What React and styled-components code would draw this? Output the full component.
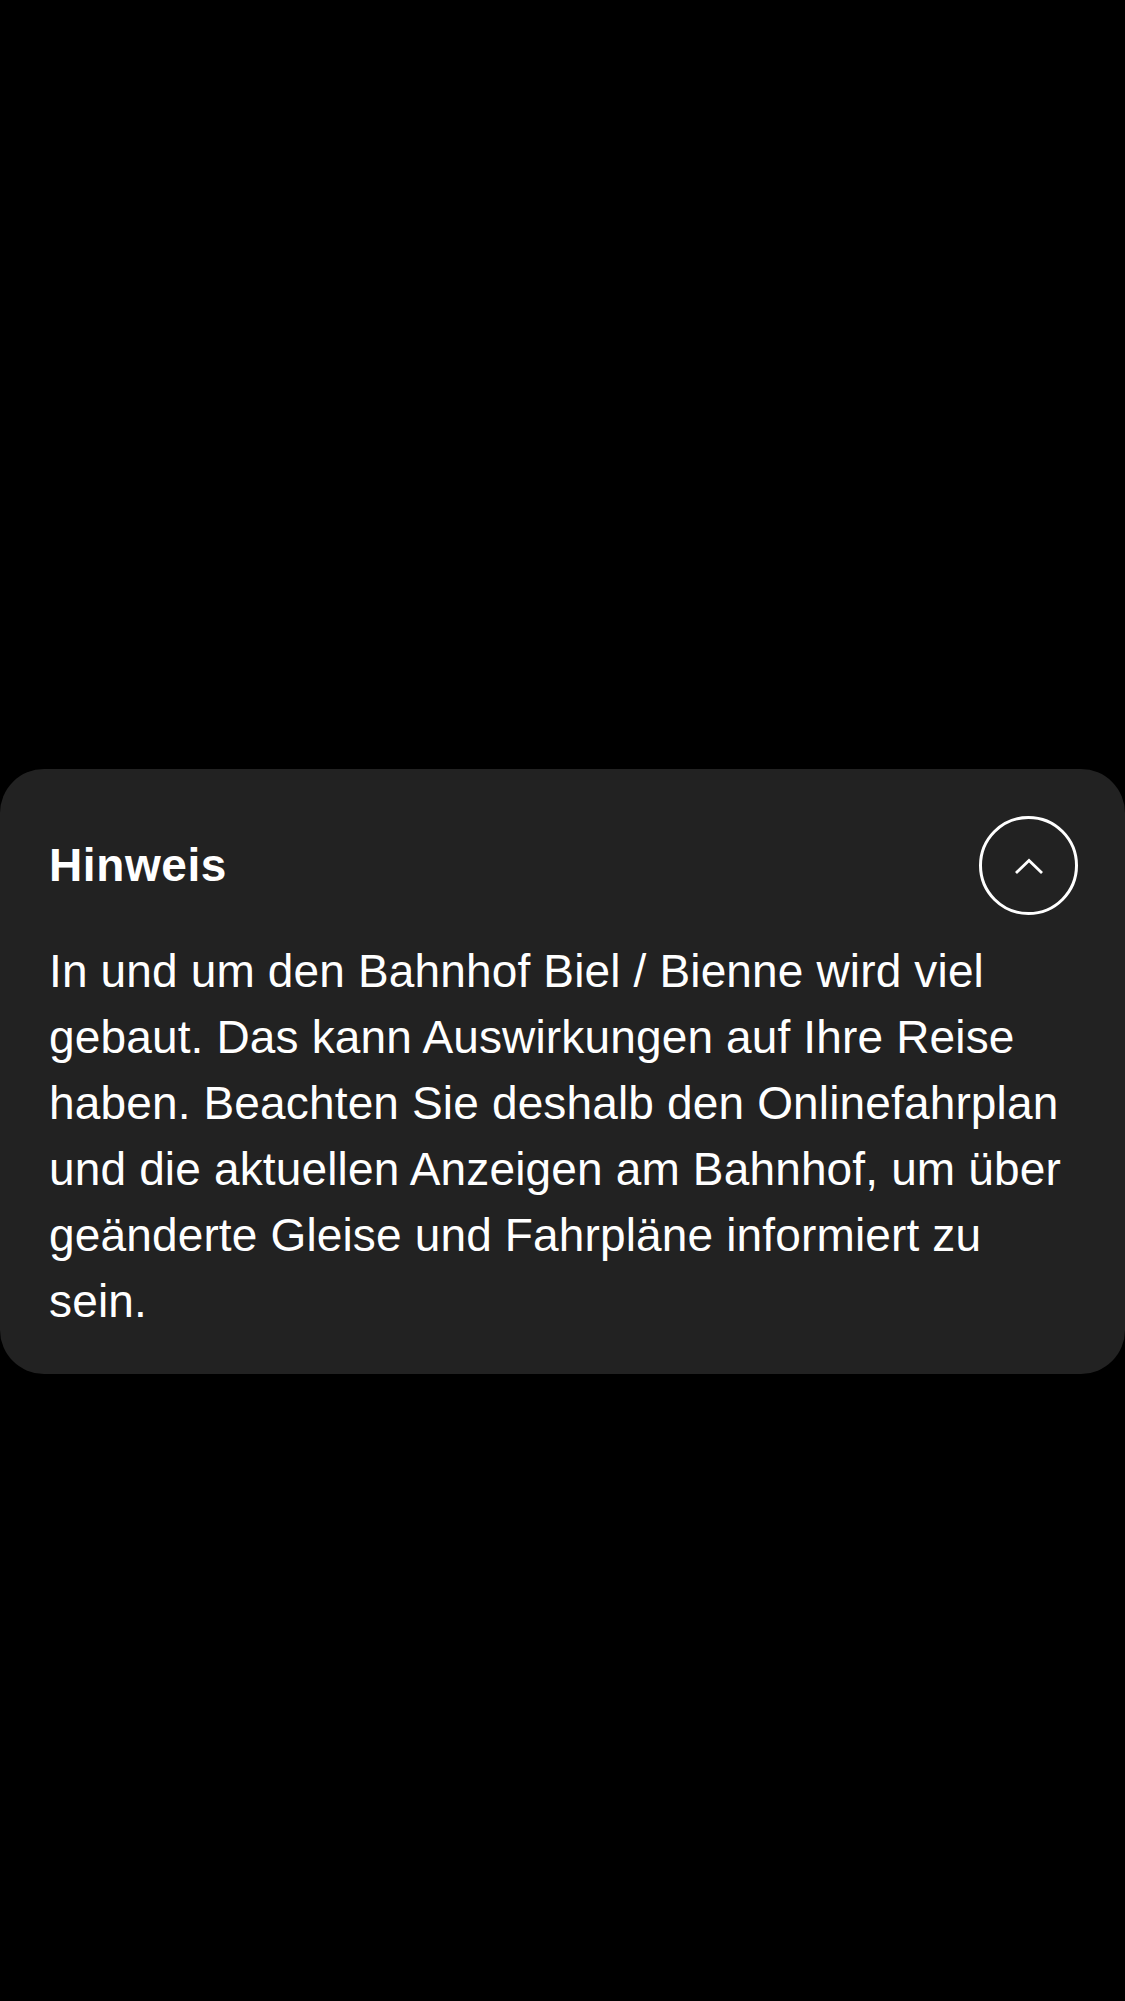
import React from "react";
import styled, { createGlobalStyle } from "styled-components";

const GlobalStyle = createGlobalStyle`
  html, body {
    margin: 0;
    padding: 0;
    background: #000;
  }
  body {
    font-family: "Liberation Sans", Arial, sans-serif;
    -webkit-font-smoothing: antialiased;
  }
`;

const Page = styled.div`
  min-height: 2001px;
  background: #000;
  padding-top: 769px;
  box-sizing: border-box;
`;

const Card = styled.section`
  background: #222222;
  border-radius: 44px;
  padding: 47px 47px 40px 49px;
  color: #fff;
`;

const Header = styled.div`
  display: flex;
  align-items: center;
  justify-content: space-between;
`;

const Title = styled.h2`
  margin: 0;
  font-size: 46px;
  font-weight: 700;
  line-height: 1.2;
  letter-spacing: 0.6px;
`;

const ToggleButton = styled.button`
  width: 99px;
  height: 99px;
  border-radius: 50%;
  border: 3px solid #fff;
  background: transparent;
  color: #fff;
  display: flex;
  align-items: center;
  justify-content: center;
  padding: 0;
  cursor: pointer;
  box-sizing: border-box;
`;

const Body = styled.p`
  margin: 23px 0 0;
  font-size: 46px;
  font-weight: 400;
  line-height: 66px;
  letter-spacing: 0.15px;
`;

function Notice() {
  return (
    <Card>
      <Header>
        <Title>Hinweis</Title>
        <ToggleButton aria-label="Einklappen">
          <svg width="28" height="16" viewBox="0 0 28 16" fill="none">
            <path
              d="M2 14L14 2.5L26 14"
              stroke="currentColor"
              strokeWidth="2.8"
              strokeLinecap="square"
            />
          </svg>
        </ToggleButton>
      </Header>
      <Body>
        In und um den Bahnhof Biel / Bienne wird viel gebaut. Das kann
        Auswirkungen auf Ihre Reise haben. Beachten Sie deshalb den
        Onlinefahrplan und die aktuellen Anzeigen am Bahnhof, um über
        geänderte Gleise und Fahrpläne informiert zu sein.
      </Body>
    </Card>
  );
}

export default function App() {
  return (
    <>
      <GlobalStyle />
      <Page>
        <Notice />
      </Page>
    </>
  );
}
